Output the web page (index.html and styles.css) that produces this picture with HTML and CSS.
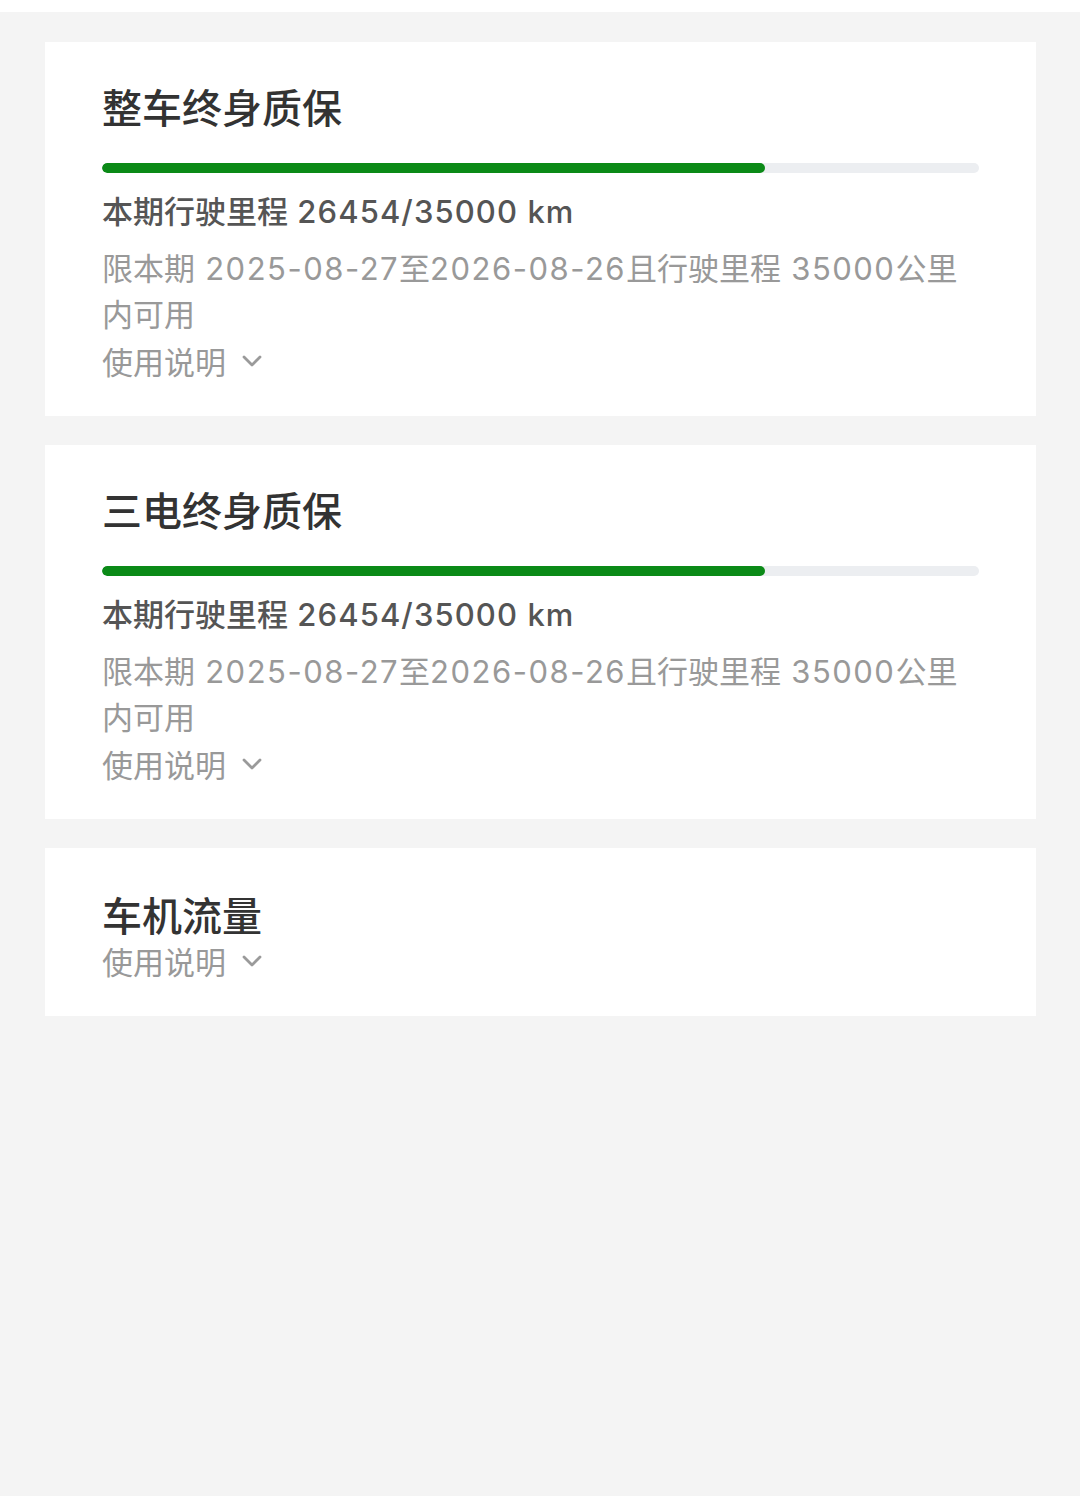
FILE: index.html
```html
<!DOCTYPE html>
<html lang="zh-CN">
<head>
<meta charset="utf-8">
<title>质保</title>
<link rel="stylesheet" href="styles.css">
</head>
<body>
<div class="topbar"></div>
<main class="list">
  <section class="card">
    <h2 class="card-title">整车终身质保</h2>
    <div class="progress"><div class="progress-fill" style="width:75.58%"></div></div>
    <p class="mileage">本期行驶里程<span class="num"> 26454/35000 km</span></p>
    <p class="desc">限本期<span class="num"> 2025-08-27</span>至<span class="num">2026-08-26</span>且行驶里程<span class="num"> 35000</span>公里内可用</p>
    <div class="usage">使用说明<svg class="chev" viewBox="0 0 20 12" width="20" height="12"><polyline points="2,2 10,10 18,2"/></svg></div>
  </section>
  <section class="card">
    <h2 class="card-title">三电终身质保</h2>
    <div class="progress"><div class="progress-fill" style="width:75.58%"></div></div>
    <p class="mileage">本期行驶里程<span class="num"> 26454/35000 km</span></p>
    <p class="desc">限本期<span class="num"> 2025-08-27</span>至<span class="num">2026-08-26</span>且行驶里程<span class="num"> 35000</span>公里内可用</p>
    <div class="usage">使用说明<svg class="chev" viewBox="0 0 20 12" width="20" height="12"><polyline points="2,2 10,10 18,2"/></svg></div>
  </section>
  <section class="card card--compact">
    <h2 class="card-title">车机流量</h2>
    <div class="usage">使用说明<svg class="chev" viewBox="0 0 20 12" width="20" height="12"><polyline points="2,2 10,10 18,2"/></svg></div>
  </section>
</main>
</body>
</html>
```
FILE: styles.css
```css
html, body {
  margin: 0;
  padding: 0;
}
body {
  background: #f4f4f4;
  font-family: Inter, "Noto Sans CJK SC", sans-serif;
  width: 1080px;
  min-height: 1496px;
}
.topbar {
  height: 12px;
  background: #ffffff;
}
.list {
  display: flex;
  flex-direction: column;
  gap: 29px;
  padding: 30px 44px 0 45px;
}
.card {
  background: #ffffff;
  padding: 40px 57px 32px 57px;
  display: flex;
  flex-direction: column;
}
.card--compact {
  padding-top: 42px;
}
.card-title {
  margin: 0;
  font-size: 40px;
  line-height: 48px;
  font-weight: 500;
  color: #333333;
  font-family: "Noto Sans CJK SC", sans-serif;
}
.progress {
  margin-top: 33px;
  height: 10px;
  border-radius: 5px;
  background: #eceef1;
  overflow: hidden;
}
.progress-fill {
  height: 100%;
  border-radius: 5px;
  background: #0b8a17;
}
.mileage {
  margin: 16px 0 0 0;
  font-size: 31px;
  line-height: 46px;
  font-weight: 500;
  color: #555555;
}
.mileage .num {
  letter-spacing: 1.1px;
}
.desc {
  margin: 11px 0 0 0;
  font-size: 31px;
  line-height: 46px;
  font-weight: 400;
  color: #999999;
}
.desc .num {
  letter-spacing: 1.5px;
}
.usage {
  display: flex;
  align-items: center;
  font-size: 31px;
  line-height: 46px;
  color: #999999;
  font-family: "Noto Sans CJK SC", sans-serif;
}
.chev {
  margin-left: 16px;
  fill: none;
  stroke: #9a9a9a;
  stroke-width: 2.8;
  stroke-linecap: round;
  stroke-linejoin: round;
}
```
